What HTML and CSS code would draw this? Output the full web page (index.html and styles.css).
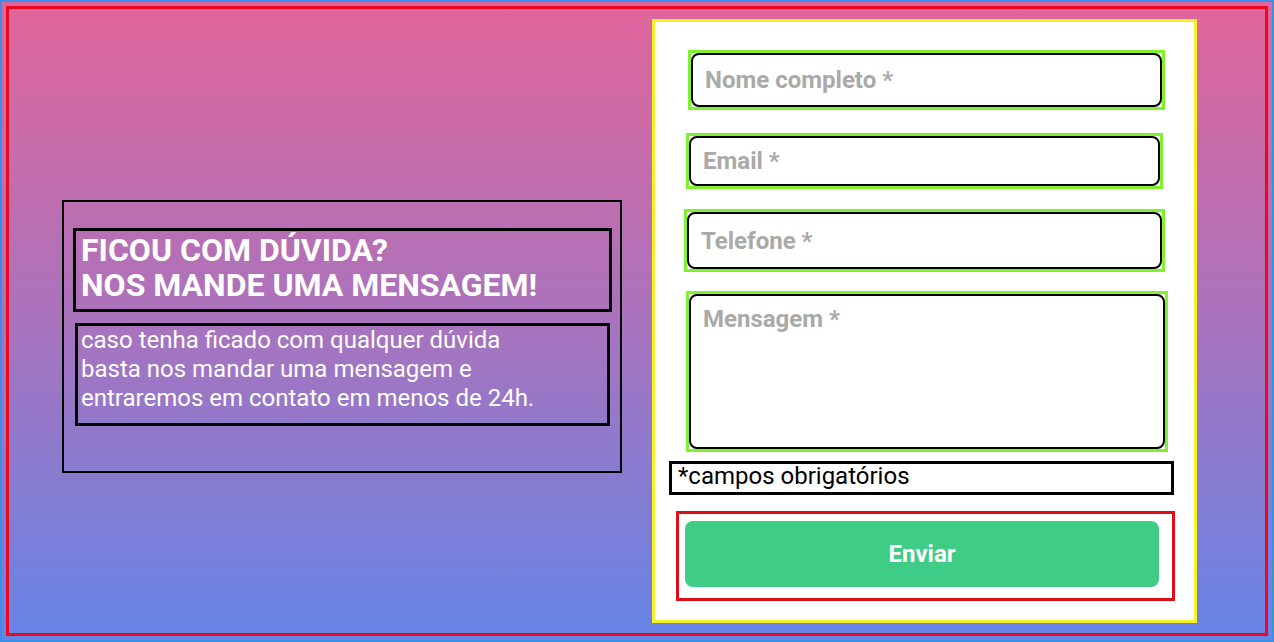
FILE: index.html
```html
<!DOCTYPE html>
<html lang="pt-BR">
<head>
<meta charset="utf-8">
<title>Contato</title>
<link rel="stylesheet" href="styles.css">
</head>
<body>
<main class="page">
  <section class="intro">
    <h1 class="intro-title">FICOU COM DÚVIDA?<br>NOS MANDE UMA MENSAGEM!</h1>
    <p class="intro-text">caso tenha ficado com qualquer dúvida<br>basta nos mandar uma mensagem e<br>entraremos em contato em menos de 24h.</p>
  </section>
  <form class="form">
    <div class="field field-1"><input class="control" type="text" placeholder="Nome completo *"></div>
    <div class="field field-2"><input class="control" type="email" placeholder="Email *"></div>
    <div class="field field-3"><input class="control" type="tel" placeholder="Telefone *"></div>
    <div class="field field-4"><textarea class="control area" placeholder="Mensagem *"></textarea></div>
    <p class="required">*campos obrigatórios</p>
    <div class="submit-wrap"><button class="submit" type="button">Enviar</button></div>
  </form>
</main>
</body>
</html>
```

FILE: styles.css
```css
* { box-sizing: border-box; }
html, body { margin: 0; height: 100%; }
body {
  border: 2px solid #3b8ee6;
  padding: 4px;
  background: linear-gradient(to bottom, #e1659a 0%, #a973bd 50%, #6584e6 100%);
  font-family: Roboto, "Liberation Sans", sans-serif;
}
.page {
  height: 100%;
  border: 3px solid #ea0a1e;
  display: flex;
  align-items: flex-start;
}
.intro {
  margin: 191px 0 0 53px;
  width: 560px;
  height: 273px;
  border: 2px solid #000;
  padding: 26px 8px 0 9px;
}
.intro-title {
  margin: 0;
  width: 539px;
  height: 84px;
  border: 3px solid #000;
  padding: 2px 4px 0 5px;
  color: #fff;
  font-size: 32px;
  line-height: 35px;
  font-weight: 700;
  white-space: nowrap;
}
.intro-text {
  margin: 11px 0 0 2px;
  width: 535px;
  height: 103px;
  border: 3px solid #000;
  padding: 0 3px;
  color: #fff;
  font-size: 24px;
  line-height: 29px;
  white-space: nowrap;
}
.form {
  margin: 10px 0 0 30px;
  width: 545px;
  height: 604px;
  border: 3px solid #f7f225;
  background: #fff;
  display: flex;
  flex-direction: column;
  align-items: flex-start;
}
.field {
  border: 3px solid #7ff22e;
  display: flex;
}
.field-1 { margin: 28px 0 0 33px; width: 477px; height: 60px; }
.field-2 { margin: 23px 0 0 31px; width: 477px; height: 56px; }
.field-3 { margin: 20px 0 0 29px; width: 481px; height: 63px; }
.field-4 { margin: 19px 0 0 31px; width: 482px; height: 161px; }
.control {
  flex: 1;
  width: 100%;
  margin: 0;
  border: 2px solid #000;
  border-radius: 8px;
  padding: 0 12px;
  font-family: Roboto, "Liberation Sans", sans-serif;
  font-size: 24px;
  font-weight: 700;
  color: #333;
  background: #fff;
  outline: none;
}
.control::placeholder { color: #a9a9a9; opacity: 1; }
.area {
  resize: none;
  padding: 10px 12px;
  line-height: 26px;
}
.required {
  margin: 9px 0 0 14px;
  width: 505px;
  height: 34px;
  border: 3px solid #000;
  padding: 0 6px;
  font-size: 24px;
  line-height: 25px;
  color: #000;
}
.submit-wrap {
  margin: 16px 0 0 21px;
  width: 499px;
  height: 90px;
  border: 3px solid #e20b16;
  padding: 7px 13px 0 6px;
}
.submit {
  display: block;
  width: 100%;
  height: 66px;
  border: 0;
  border-radius: 8px;
  background: #3ecc87;
  color: #fff;
  font-family: Roboto, "Liberation Sans", sans-serif;
  font-size: 24px;
  font-weight: 700;
}
```
